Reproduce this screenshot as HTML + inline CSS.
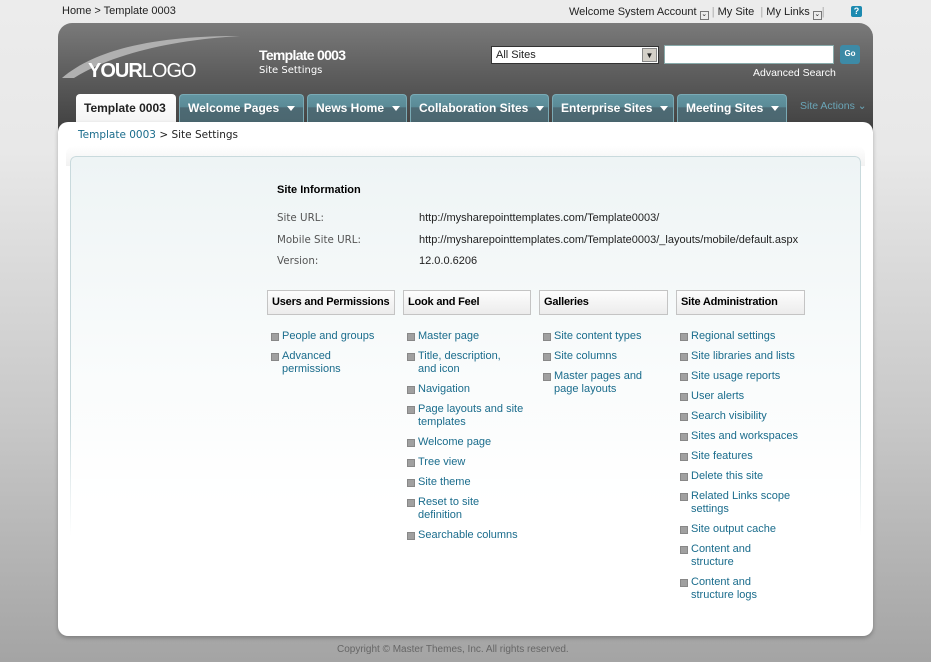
<!DOCTYPE html>
<html><head><style>
*{margin:0;padding:0;box-sizing:border-box}
body{width:931px;height:662px;overflow:hidden;background:linear-gradient(#ececec 0px,#e8e8e8 150px,#c8c8c8 420px,#a4a4a4 662px);font-family:"Liberation Sans",Tahoma,sans-serif;font-size:11px;color:#222;position:relative}
.a{position:absolute;white-space:nowrap}
#hdr{position:absolute;left:58px;top:23px;width:815px;height:110px;border-radius:14px 14px 0 0;background:linear-gradient(#7a7a7a,#5e5e5e 45%,#3f3f3f)}
#main{position:absolute;left:58px;top:122px;width:815px;height:514px;background:#fff;border-radius:10px;box-shadow:0 2px 4px rgba(0,0,0,.25)}
#panel{position:absolute;left:70px;top:156px;width:791px;height:380px;border:1px solid #c9dadd;border-bottom:none;border-radius:6px 6px 0 0;background:linear-gradient(#eef4f5,#fafcfc 60%,#fff);-webkit-mask-image:linear-gradient(#000 70%,transparent);mask-image:linear-gradient(#000 70%,transparent)}
#panelfade{position:absolute;left:66px;top:146px;width:799px;height:20px;border-radius:8px 8px 0 0;background:linear-gradient(#fff,#f2f2f2)}
.tab{position:absolute;top:94px;height:28px;border-radius:4px 4px 0 0;background:linear-gradient(#6396a2 0,#5a8a96 45%,#4d6a74 46%,#4b6770);border:1px solid #7aaab5;border-bottom:none;color:#fff;font-weight:bold;font-size:12px;padding:6px 0 0 8px;white-space:nowrap}
.tab i{display:inline-block;width:0;height:0;border-left:4px solid transparent;border-right:4px solid transparent;border-top:5px solid #fff;margin-left:8px;vertical-align:1px}
.hd{position:absolute;top:290px;height:25px;border:1px solid #c4c4c4;background:linear-gradient(#fdfdfd,#ececec);font-weight:bold;font-size:11px;padding:5px 0 0 4px;color:#000;white-space:nowrap;letter-spacing:-0.2px}
.ul{position:absolute;top:330px;color:#1a6c8c;font-size:11px;line-height:13px}
.ul div{position:relative;padding-left:15px;margin-bottom:7px}
.ul div:before{content:"";position:absolute;left:4px;top:3px;width:6px;height:6px;background:#a0a0a0;border:1px solid #888}
.lbl{font-family:"DejaVu Sans",Verdana,sans-serif;font-size:10.3px;color:#555}
</style></head><body>
<div class="a" style="left:62px;top:5px;font-size:11px">Home &gt; Template 0003</div>
<div class="a" style="left:569px;top:6px;font-size:11px;color:#222">Welcome System Account <span style="display:inline-block;width:9px;height:9px;border:1px solid #777;font-size:7px;line-height:6px;text-align:center;vertical-align:-1px">⌄</span> <span style="color:#aaa">|</span> My Site &nbsp;<span style="color:#aaa">|</span> My Links <span style="display:inline-block;width:9px;height:9px;border:1px solid #777;font-size:7px;line-height:6px;text-align:center;vertical-align:-1px">⌄</span><span style="color:#aaa">|</span></div>
<div class="a" style="left:851px;top:6px;width:11px;height:11px;background:#1c8ab0;border-radius:2px;color:#fff;font-size:9px;font-weight:bold;text-align:center;line-height:11px">?</div>
<div id="hdr"></div>
<svg class="a" style="left:62px;top:34px" width="180" height="45"><path d="M0 44 C40 10 110 2 178 2 C110 6 50 20 12 44 Z" fill="#b0b0b0"/></svg>
<div class="a" style="left:88px;top:60px;font-size:20px;color:#fff;letter-spacing:-1px"><b>YOUR</b>LOGO</div>
<div class="a" style="left:259px;top:47px;font-size:14px;color:#fff;font-weight:bold;letter-spacing:-0.7px">Template 0003</div>
<div class="a" style="left:259px;top:65px;font-size:10px;color:#fff;font-family:'DejaVu Sans',sans-serif">Site Settings</div>
<div class="a" style="left:491px;top:46px;width:168px;height:18px;background:#fff;border:1px solid #333;font-size:11px;padding:2px 4px">All Sites<span style="position:absolute;right:1px;top:1px;width:15px;height:14px;background:#d4d0c8;border:1px solid #888;font-size:8px;text-align:center;line-height:13px">▼</span></div>
<div class="a" style="left:664px;top:45px;width:170px;height:19px;background:#fff;border:1px solid #8aa"></div>
<div class="a" style="left:840px;top:45px;width:20px;height:19px;background:#3d8aa6;border-radius:3px;color:#fff;font-size:8px;text-align:center;line-height:18px;font-weight:bold">Go</div>
<div class="a" style="left:753px;top:67px;font-size:10.5px;color:#fff">Advanced Search</div>
<div class="a" style="left:76px;top:94px;width:100px;height:29px;background:linear-gradient(#fff,#f4f4f4);border-radius:4px 4px 0 0;font-size:12px;font-weight:bold;padding:7px 0 0 8px">Template 0003</div>
<div class="tab" style="left:179px;width:125px">Welcome Pages<i></i></div>
<div class="tab" style="left:307px;width:100px">News Home<i></i></div>
<div class="tab" style="left:410px;width:139px">Collaboration Sites<i></i></div>
<div class="tab" style="left:552px;width:122px">Enterprise Sites<i></i></div>
<div class="tab" style="left:677px;width:110px">Meeting Sites<i></i></div>
<div class="a" style="left:800px;top:100px;font-size:10.5px;color:#6aa6b8">Site Actions ⌄</div>
<div id="main"></div>
<div class="a" style="left:78px;top:129px;font-family:'DejaVu Sans',sans-serif;font-size:10.5px"><span style="color:#1a6c8c">Template 0003</span> &gt; Site Settings</div>
<div id="panelfade"></div>
<div id="panel"></div>
<div class="a" style="left:277px;top:184px;font-weight:bold;font-size:11px;color:#000">Site Information</div>
<div class="a lbl" style="left:277px;top:212px">Site URL:</div>
<div class="a lbl" style="left:277px;top:234px">Mobile Site URL:</div>
<div class="a lbl" style="left:277px;top:255px">Version:</div>
<div class="a" style="left:419px;top:212px">http://mysharepointtemplates.com/Template0003/</div>
<div class="a" style="left:419px;top:234px">http://mysharepointtemplates.com/Template0003/_layouts/mobile/default.aspx</div>
<div class="a" style="left:419px;top:255px">12.0.0.6206</div>
<div class="hd" style="left:267px;width:128px">Users and Permissions</div>
<div class="hd" style="left:403px;width:128px">Look and Feel</div>
<div class="hd" style="left:539px;width:129px">Galleries</div>
<div class="hd" style="left:676px;width:129px">Site Administration</div>
<div class="ul" style="left:267px;width:125px"><div>People and groups</div><div>Advanced<br>permissions</div></div>
<div class="ul" style="left:403px;width:125px"><div>Master page</div><div>Title, description,<br>and icon</div><div>Navigation</div><div>Page layouts and site<br>templates</div><div>Welcome page</div><div>Tree view</div><div>Site theme</div><div>Reset to site<br>definition</div><div>Searchable columns</div></div>
<div class="ul" style="left:539px;width:125px"><div>Site content types</div><div>Site columns</div><div>Master pages and<br>page layouts</div></div>
<div class="ul" style="left:676px;width:125px"><div>Regional settings</div><div>Site libraries and lists</div><div>Site usage reports</div><div>User alerts</div><div>Search visibility</div><div>Sites and workspaces</div><div>Site features</div><div>Delete this site</div><div>Related Links scope<br>settings</div><div>Site output cache</div><div>Content and<br>structure</div><div>Content and<br>structure logs</div></div>
<div class="a" style="left:337px;top:644px;font-size:10px;color:#666">Copyright © Master Themes, Inc. All rights reserved.</div>
</body></html>
